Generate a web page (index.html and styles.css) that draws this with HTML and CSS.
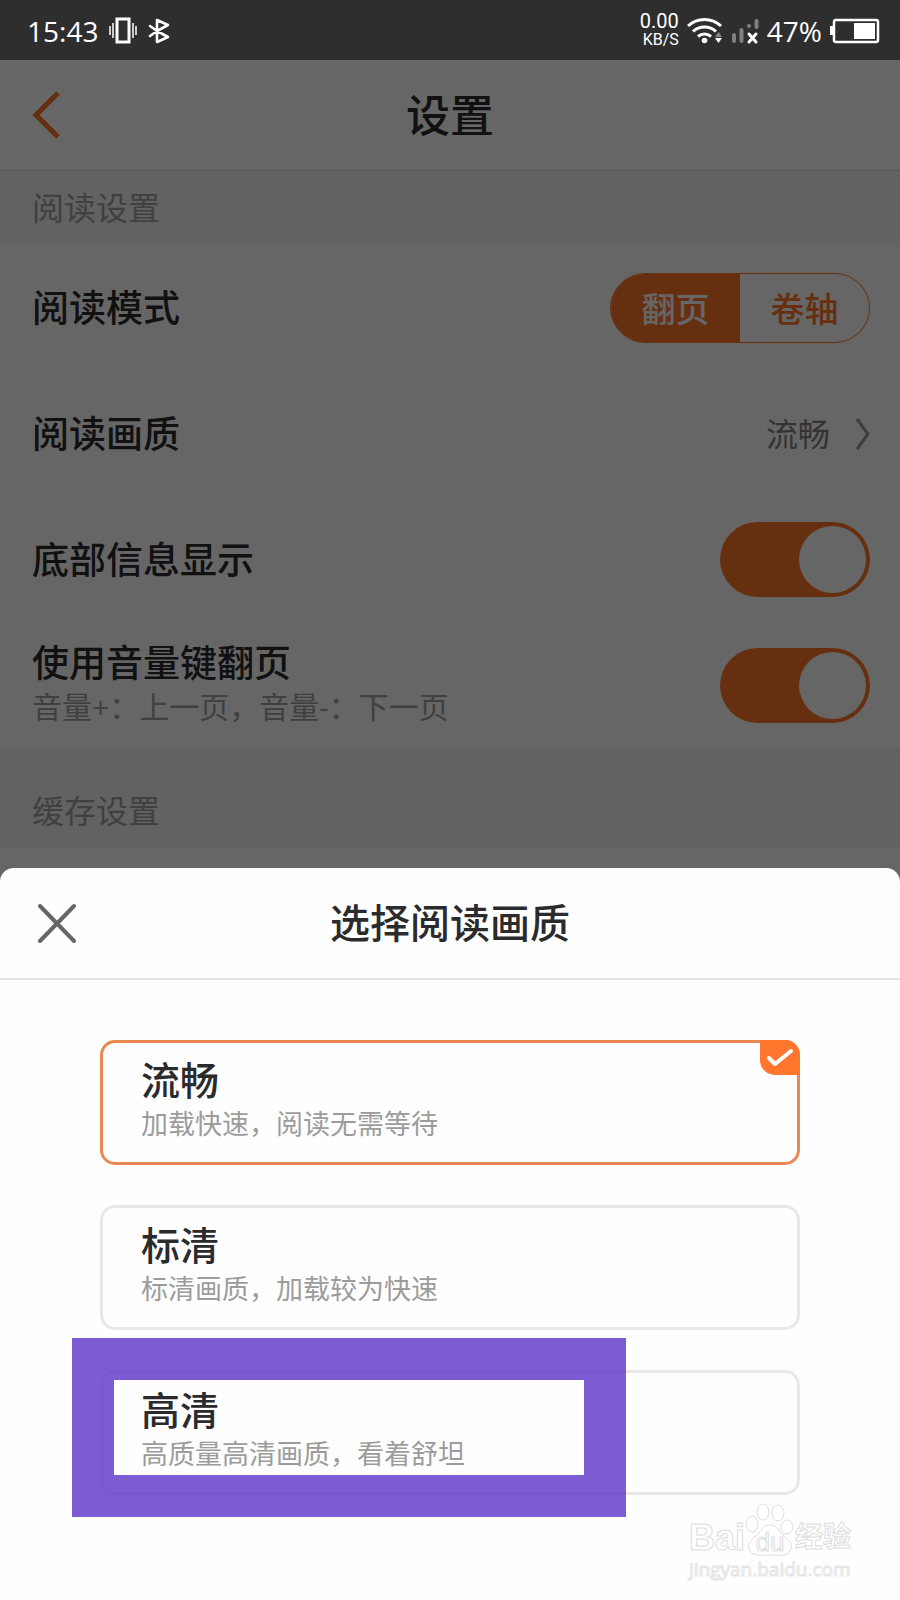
FILE: index.html
```html
<!DOCTYPE html>
<html lang="zh-CN">

<head>
    <meta charset="UTF-8">
    <meta name="viewport" content="width=device-width, initial-scale=1.0">
    <title>设置</title>
    <link rel="stylesheet" href="styles.css">
</head>

<body>

    <div class="status-bar">
        <div class="status-group">
            <span class="clock">15:43</span>
            <svg class="icon" width="28" height="28" viewBox="0 0 28 28" fill="none" stroke="#fff">
                <rect x="8" y="2" width="12" height="23" stroke-width="3" />
                <path d="M1 9v9M4 6v15M24 6v15M27 9v9" stroke-width="1.5" />
            </svg>
            <svg class="icon" width="22" height="28" viewBox="0 0 22 28" fill="none" stroke="#fff" stroke-width="2.6" stroke-linecap="round" stroke-linejoin="round">
                <path d="M2 9l7 5 11 6-11 5V3l11 5-11 6-7 5" />
            </svg>
        </div>
        <div class="status-group">
            <div class="speed">
                <div class="speed-num">0.00</div>
                <div class="speed-unit">KB/S</div>
            </div>
            <svg class="icon" width="36" height="28" viewBox="0 0 36 28" fill="none" stroke="#fff" stroke-width="3">
                <path d="M1 9a24 24 0 0 1 33 0M6 14.500a17 17 0 0 1 23 0M11 19.500a10 10 0 0 1 13 0" />
                <circle cx="17.500" cy="23.500" r="2.800" fill="#fff" stroke="none" />
                <path d="M28 20l3.500-5 3.500 5z" fill="#888" stroke="none" />
                <path d="M28 21l3.500 5 3.500-5z" fill="#fff" stroke="none" />
            </svg>
            <svg class="icon" width="28" height="28" viewBox="0 0 28 28" fill="none" stroke="#808080" stroke-width="4" stroke-linecap="round">
                <path d="M3 18v6M10.500 13v11M18 9v0M25.500 4v6" />
                <path d="M18 17l7 8M25 17l-7 8" stroke="#fff" stroke-width="3" />
            </svg>
            <span class="clock">47%</span>
            <svg class="icon" width="50" height="28" viewBox="0 0 50 28">
                <rect x="4" y="3" width="44" height="22" rx="2" fill="none" stroke="#fff" stroke-width="2.5" />
                <path d="M0 9h3v9H0z" fill="#fff" />
                <rect x="24" y="6" width="21" height="16" fill="#fff" />
            </svg>
        </div>
    </div>

    <div class="settings">
        <div class="header">
            <button class="back" aria-label="返回">
                <svg width="28" height="48" viewBox="0 0 28 48" fill="none" stroke="#ff7629" stroke-width="5">
                    <path d="M26 2L4 24l22 22" />
                </svg>
            </button>
            <h1 class="title">设置</h1>
        </div>

        <div class="section">阅读设置</div>

        <div class="row">
            <span class="label">阅读模式</span>
            <div class="segment">
                <button class="segment-btn active">翻页</button>
                <button class="segment-btn">卷轴</button>
            </div>
        </div>
        <div class="row">
            <span class="label">阅读画质</span>
            <div class="value">
                <span>流畅</span>
                <svg width="14" height="32" viewBox="0 0 14 32" fill="none" stroke="#999" stroke-width="3">
                    <path d="M1 1l11 15L1 31" />
                </svg>
            </div>
        </div>
        <div class="row">
            <label class="label" for="bottom-info">底部信息显示</label>
            <input class="switch" type="checkbox" id="bottom-info" checked>
        </div>
        <div class="row">
            <label class="label-group" for="volume-key">
                <span class="label">使用音量键翻页</span>
                <span class="hint">音量+：上一页，音量-：下一页</span>
            </label>
            <input class="switch" type="checkbox" id="volume-key" checked>
        </div>

        <div class="section section-gap">缓存设置</div>

        <div class="mask"></div>
    </div>

    <!-- Bottom sheet -->
    <div class="sheet">
        <div class="sheet-header">
            <button class="close" aria-label="关闭">
                <svg width="40" height="40" viewBox="0 0 40 40" fill="none" stroke="#666" stroke-width="4" stroke-linecap="round">
                    <path d="M3 3l34 35M37 3L3 38" />
                </svg>
            </button>
            <h2 class="sheet-title">选择阅读画质</h2>
        </div>
        <div class="options">
            <label class="option">
                <input type="radio" name="quality" checked>
                <span class="option-name">流畅</span>
                <span class="option-desc">加载快速，阅读无需等待</span>
                <span class="tick">
                    <svg width="40" height="35" viewBox="0 0 40 35" fill="none" stroke="#fff" stroke-width="4" stroke-linecap="round" stroke-linejoin="round">
                        <path d="M9 18l6 6 16-13" />
                    </svg>
                </span>
            </label>
            <label class="option">
                <input type="radio" name="quality">
                <span class="option-name">标清</span>
                <span class="option-desc">标清画质，加载较为快速</span>
            </label>
            <label class="option">
                <input type="radio" name="quality">
                <span class="option-name">高清</span>
                <span class="option-desc">高质量高清画质，看着舒坦</span>
                <span class="highlight"></span>
            </label>
        </div>
        <div class="watermark">
            <div class="brand">
                <span>Bai</span>
                <span class="paw">
                    <svg width="50" height="54" viewBox="0 0 50 54" fill="#fff" stroke="#ddd">
                        <ellipse cx="7" cy="21" rx="6" ry="8" />
                        <ellipse cx="18" cy="9" rx="6" ry="8" />
                        <ellipse cx="33" cy="10" rx="6" ry="8" />
                        <ellipse cx="42" cy="24" rx="6" ry="7" />
                        <path d="M25 22c-8 0-9 7-14 11-7 5-9 10-6 15 4 6 12 4 20 4s16 2 20-4c3-5 1-10-6-15-5-4-6-11-14-11z" />
                    </svg>
                    <span class="du">du</span>
                </span>
                <span class="brand-cn">经验</span>
            </div>
            <div class="site">jingyan.baidu.com</div>
        </div>
    </div>

</body>

</html>
```

FILE: styles.css
```css
* {
    box-sizing: border-box;
}

body {
    margin: 0;
    min-height: 100vh;
    display: flex;
    flex-direction: column;
    font-family: "Open Sans", "Noto Sans CJK SC", sans-serif;
    background: #fff;
    color: #2b2b2d;
    overflow: hidden;
}

button {
    padding: 0;
    border: none;
    background: none;
    font-family: inherit;
    cursor: pointer;
}

svg {
    display: block;
}

/* Status bar */
.status-bar {
    height: 60px;
    padding: 2px 20px 0 27px;
    display: flex;
    justify-content: space-between;
    align-items: center;
    background: #2e2e2e;
    color: #fff;
}

.status-group {
    display: flex;
    align-items: center;
    gap: 11px;
}

.status-group:last-child {
    gap: 8px;
}

.clock {
    font-size: 28px;
    line-height: 40px;
}

.speed {
    padding-bottom: 2px;
    font-family: Roboto, sans-serif;
    text-align: right;
}

.speed-num {
    font-size: 20px;
    line-height: 20px;
}

.speed-unit {
    font-size: 16px;
    line-height: 18px;
}

/* Settings page */
.settings {
    position: relative;
    flex: 1;
}

.header {
    height: 111px;
    display: grid;
    grid-template-columns: 96px 1fr 96px;
    align-items: center;
    border-bottom: 1px solid #d8d8d8;
}

.back {
    justify-self: start;
    padding-left: 32px;
}

.title {
    margin: 0;
    font-size: 44px;
    line-height: 60px;
    font-weight: 500;
    text-align: center;
}

.section {
    padding: 13px 32px;
    font-size: 32px;
    line-height: 48px;
    color: #a0a0a0;
    background: #f4f4f4;
}

.section-gap {
    padding-top: 38px;
    padding-bottom: 14px;
}

.row {
    height: 126px;
    margin-left: 32px;
    padding-right: 30px;
    display: flex;
    justify-content: space-between;
    align-items: center;
    border-bottom: 1px solid #f4f4f4;
}

.label {
    display: block;
    font-size: 37px;
    line-height: 48px;
    font-weight: 500;
}

.label-group {
    padding-bottom: 6px;
}

.hint {
    display: block;
    font-size: 30px;
    line-height: 40px;
    color: #a0a0a0;
}

.segment {
    display: flex;
    border: 1px solid #ff7629;
    border-radius: 35px;
    overflow: hidden;
}

.segment-btn {
    width: 129px;
    height: 68px;
    font-size: 34px;
    font-weight: 500;
    color: #ff7629;
}

.segment-btn.active {
    background: #ff7629;
    color: #fff;
}

.value {
    display: flex;
    align-items: center;
    gap: 26px;
    font-size: 32px;
    line-height: 48px;
    color: #808080;
}

.switch {
    appearance: none;
    width: 150px;
    height: 75px;
    margin: 0;
    padding: 4px;
    display: flex;
    justify-content: flex-end;
    border-radius: 38px;
    background: #ff7629;
}

.switch::after {
    content: "";
    width: 67px;
    height: 67px;
    border-radius: 50%;
    background: #fff;
}

.mask {
    position: absolute;
    top: 0;
    left: 0;
    right: 0;
    bottom: 0;
    background: rgba(0, 0, 0, 0.6);
}

/* Sheet */
.sheet {
    position: fixed;
    left: 0;
    right: 0;
    bottom: 0;
    border-radius: 14px 14px 0 0;
    background: #fefefe;
}

.sheet-header {
    height: 112px;
    display: grid;
    grid-template-columns: 96px 1fr 96px;
    align-items: center;
    border-bottom: 2px solid #e4e4e4;
}

.close {
    justify-self: start;
    padding-left: 37px;
}

.sheet-title {
    margin: 0;
    font-size: 40px;
    line-height: 56px;
    font-weight: 500;
    text-align: center;
}

.options {
    padding: 60px 100px 105px;
    display: flex;
    flex-direction: column;
    gap: 40px;
}

.option {
    position: relative;
    height: 125px;
    padding: 13px 38px;
    display: flex;
    flex-direction: column;
    border: 3px solid #e8e8ea;
    border-radius: 15px;
}

.option:has(input:checked) {
    border-color: #e98850;
}

.option input {
    position: absolute;
    opacity: 0;
}

.option-name {
    font-size: 39px;
    line-height: 48px;
    font-weight: 500;
}

.option-desc {
    font-size: 27px;
    line-height: 40px;
    color: #9c9c9c;
}

.tick {
    position: absolute;
    top: -3px;
    right: -3px;
    border-radius: 0 15px 0 15px;
    background: #ff762c;
}

.highlight {
    position: absolute;
    top: -35px;
    left: -31px;
    width: 554px;
    height: 179px;
    border: 42px solid rgba(103, 64, 204, 0.86);
}

.watermark {
    position: absolute;
    right: 49px;
    bottom: 18px;
    color: #fff;
}

.brand {
    display: flex;
    align-items: flex-end;
    font-family: "Liberation Sans", "Noto Sans CJK SC", sans-serif;
    font-size: 36px;
    line-height: 38px;
    font-weight: bold;
    -webkit-text-stroke: 1px #ddd;
}

.paw {
    position: relative;
}

.du {
    position: absolute;
    left: 0;
    right: 0;
    bottom: 0;
    font-size: 26px;
    line-height: 30px;
    font-weight: normal;
    text-align: center;
}

.brand-cn {
    font-size: 28px;
}

.site {
    font-size: 19px;
    line-height: 25px;
    -webkit-text-stroke: 1px #e4e4e4;
}
```
